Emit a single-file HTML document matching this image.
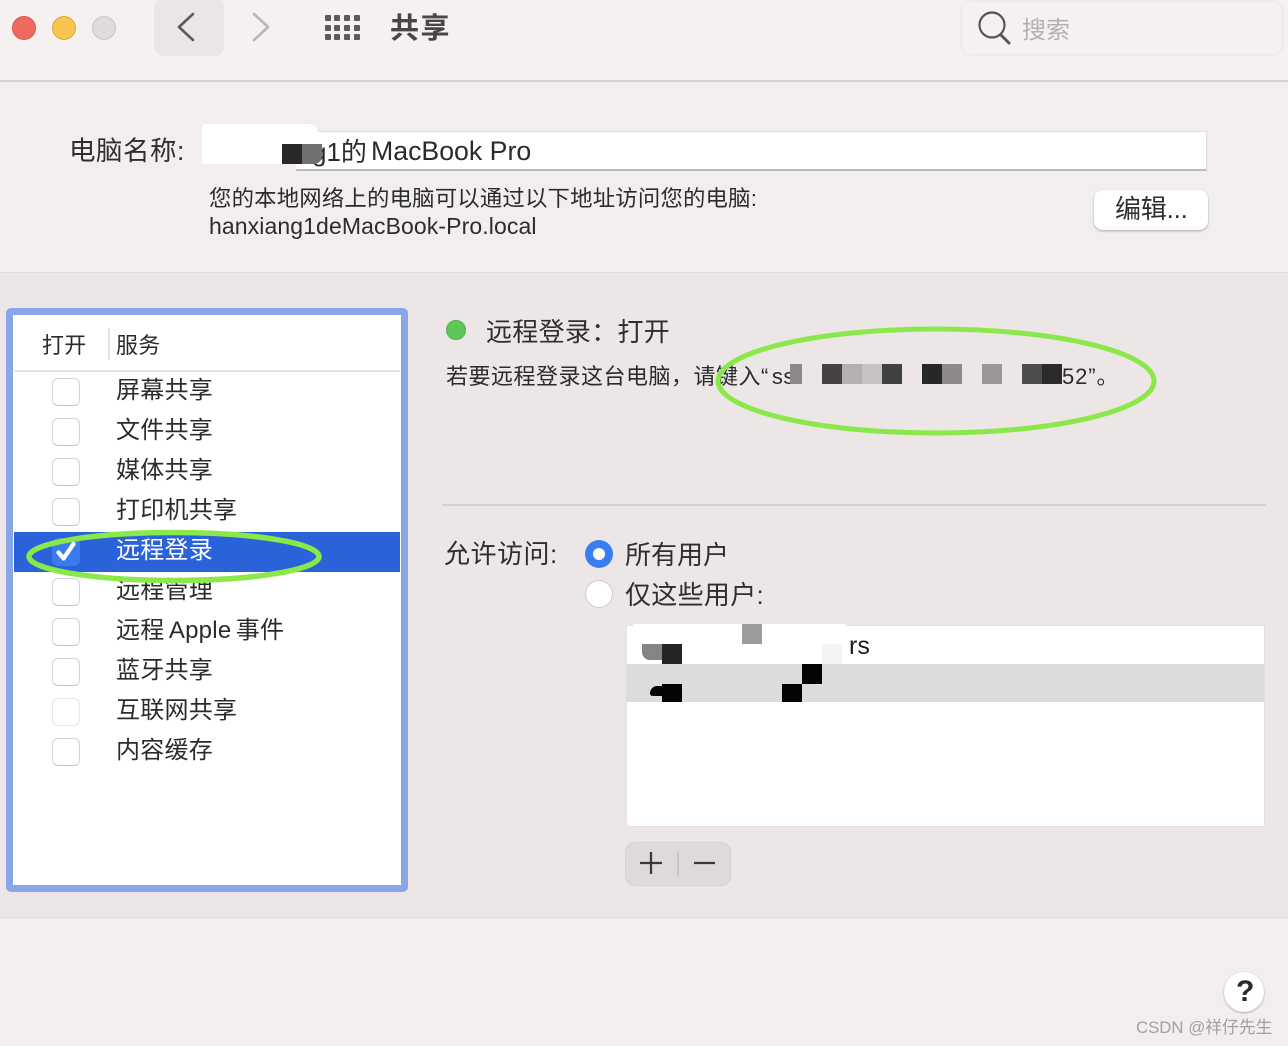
<!DOCTYPE html>
<html lang="zh"><head><meta charset="utf-8"><title>共享</title>
<style>
html,body{margin:0;padding:0}
body{width:1288px;height:1046px;position:relative;overflow:hidden;background:#f3eeee;font-family:"Liberation Sans","Noto Sans CJK SC",sans-serif;color:#2b2b2b}
.a{position:absolute}
.t{position:absolute;white-space:nowrap;line-height:1}
.cb{position:absolute;left:52px;width:28px;height:28px;box-sizing:border-box;background:#fff;border:1px solid #d2d0d0;border-bottom-color:#c4c2c2;border-radius:6px}
.li{left:116px;font-size:24px;letter-spacing:.25px;word-spacing:-2.6px}
.px{position:absolute}
</style></head><body>
<div class="a" style="left:0;top:0;width:1288px;height:80px;background:#f6f1f1"></div>
<div class="a" style="left:0;top:80px;width:1288px;height:2px;background:#d5d1d1"></div>
<div class="a" style="left:12px;top:16px;width:24px;height:24px;border-radius:50%;background:#ee6a5f;box-sizing:border-box;border:1px solid #d9584f"></div>
<div class="a" style="left:52px;top:16px;width:24px;height:24px;border-radius:50%;background:#f6c34f;box-sizing:border-box;border:1px solid #dfa93a"></div>
<div class="a" style="left:92px;top:16px;width:24px;height:24px;border-radius:50%;background:#e0dbdb;box-sizing:border-box;border:1px solid #c9c4c4"></div>
<div class="a" style="left:154px;top:-2px;width:70px;height:58px;border-radius:10px;background:#ebe6e6"></div>
<svg class="a" style="left:0;top:0" width="400" height="60" fill="none">
<path d="M193 14 L179 27 L193 40" stroke="#5e5a5a" stroke-width="2.6" stroke-linecap="round" stroke-linejoin="round"/>
<path d="M254 14 L268 27 L254 40" stroke="#b9b5b5" stroke-width="2.6" stroke-linecap="round" stroke-linejoin="round"/>
<g fill="#5f5b5b">
<rect x="325" y="15" width="6" height="6" rx="1"/><rect x="334" y="15" width="6" height="6" rx="1"/><rect x="344" y="15" width="6" height="6" rx="1"/><rect x="354" y="15" width="6" height="6" rx="1"/>
<rect x="325" y="25" width="6" height="6" rx="1"/><rect x="334" y="25" width="6" height="6" rx="1"/><rect x="344" y="25" width="6" height="6" rx="1"/><rect x="354" y="25" width="6" height="6" rx="1"/>
<rect x="325" y="34" width="6" height="6" rx="1"/><rect x="334" y="34" width="6" height="6" rx="1"/><rect x="344" y="34" width="6" height="6" rx="1"/><rect x="354" y="34" width="6" height="6" rx="1"/>
</g></svg>
<div class="t" style="left:390px;top:15px;font-size:29px;font-weight:bold;color:#4a4646;letter-spacing:1.5px">共享</div>
<div class="a" style="left:960px;top:0;width:324px;height:56px;box-sizing:border-box;border:2px solid #efeaea;border-radius:12px"></div>
<svg class="a" style="left:975px;top:7px" width="40" height="38" fill="none"><circle cx="17" cy="18" r="12.5" stroke="#555" stroke-width="2.2"/><path d="M26 28 L34 36" stroke="#555" stroke-width="3" stroke-linecap="round"/></svg>
<div class="t" style="left:1022px;top:19px;font-size:24px;color:#b4b0b0">搜索</div>

<div class="t" style="left:69px;top:138px;font-size:26.5px;color:#2e2e2e;letter-spacing:.5px">电脑名称:</div>
<div class="a" style="left:296px;top:131px;width:911px;height:40px;box-sizing:border-box;background:#fff;border:1px solid #e0dcdc;border-bottom:2px solid #bdbaba;border-left:0"></div>
<div class="a" style="left:202px;top:124px;width:116px;height:40px;background:#fff;border-radius:3px 8px 0 0"></div>
<div class="t" style="left:312px;top:139px;font-size:26px;color:#2b2b2b">g1的</div>
<div class="t" style="left:371px;top:138px;font-size:26.7px;color:#2b2b2b">MacBook Pro</div>
<div class="px" style="left:282px;top:144px;width:20px;height:20px;background:#282828"></div>
<div class="px" style="left:302px;top:144px;width:20px;height:20px;background:#707070;border-radius:0 0 8px 0"></div>
<div class="t" style="left:209px;top:188px;font-size:22.4px;color:#2b2b2b;letter-spacing:.18px">您的本地网络上的电脑可以通过以下地址访问您的电脑:</div>
<div class="t" style="left:209px;top:215px;font-size:23px;color:#2b2b2b;letter-spacing:.1px">hanxiang1deMacBook-Pro.local</div>
<div class="a" style="left:1094px;top:190px;width:114px;height:40px;background:#fff;border-radius:9px;box-shadow:0 1px 2px rgba(0,0,0,.3)"></div>
<div class="t" style="left:1115px;top:196px;font-size:26px;color:#2e2e2e;letter-spacing:-.2px">编辑...</div>

<div class="a" style="left:0;top:272px;width:1288px;height:646px;box-sizing:border-box;background:#ece6e6;border-top:1px solid #e3dede;border-bottom:1px solid #e0dbdb"></div>

<div class="a" style="left:6px;top:308px;width:402px;height:584px;box-sizing:border-box;background:#fff;border:7px solid #8ba6e8;border-radius:5px"></div>
<div class="t" style="left:42px;top:335px;font-size:22px;letter-spacing:.3px">打开</div>
<div class="a" style="left:108px;top:328px;width:2px;height:32px;background:#e3e1e1"></div>
<div class="t" style="left:116px;top:335px;font-size:22px;letter-spacing:.3px">服务</div>
<div class="a" style="left:14px;top:370px;width:386px;height:2px;background:#e5e3e3"></div>
<div class="a" style="left:14px;top:532px;width:386px;height:40px;background:#2962d9"></div>

<div class="cb" style="top:378px"></div><div class="t li" style="top:379px">屏幕共享</div>
<div class="cb" style="top:418px"></div><div class="t li" style="top:419px">文件共享</div>
<div class="cb" style="top:458px"></div><div class="t li" style="top:459px">媒体共享</div>
<div class="cb" style="top:498px"></div><div class="t li" style="top:499px">打印机共享</div>
<div class="cb" style="top:538px;background:#3a7cf0;border:0"></div>
<svg class="a" style="left:52px;top:538px" width="28" height="28" fill="none"><path d="M6.5 14.5 L11.5 20.5 L21.5 6" stroke="#fff" stroke-width="4.2" stroke-linecap="round" stroke-linejoin="round"/></svg>
<div class="t li" style="top:539px;color:#fff">远程登录</div>
<div class="cb" style="top:578px"></div><div class="t li" style="top:579px">远程管理</div>
<div class="cb" style="top:618px"></div><div class="t li" style="top:619px">远程 Apple 事件</div>
<div class="cb" style="top:658px"></div><div class="t li" style="top:659px">蓝牙共享</div>
<div class="cb" style="top:698px;border-color:#e8e6e6"></div><div class="t li" style="top:699px">互联网共享</div>
<div class="cb" style="top:738px"></div><div class="t li" style="top:739px">内容缓存</div>

<div class="a" style="left:446px;top:320px;width:20px;height:20px;border-radius:50%;background:#5fc658;box-sizing:border-box;border:1px solid #52b04c"></div>
<div class="t" style="left:486px;top:319px;font-size:26px;color:#2e2e2e;letter-spacing:.3px">远程登录&#xFF1A;打开</div>
<div class="t" style="left:446px;top:366px;font-size:22px;color:#2b2b2b;letter-spacing:.5px">若要远程登录这台电脑&#xFF0C;请键入“<span style="margin-left:3px">ss</span></div>
<div class="a" style="left:795px;top:345px;width:267px;height:60px;background:#ece6e6"></div>
<div class="t" style="left:1062px;top:366px;font-size:22px;color:#2b2b2b;letter-spacing:.9px">52”。</div>
<div class="px" style="left:790px;top:364px;width:12px;height:20px;background:#8c8888"></div>
<div class="px" style="left:822px;top:364px;width:20px;height:20px;background:#454244"></div>
<div class="px" style="left:842px;top:364px;width:20px;height:20px;background:#b5b0b0"></div>
<div class="px" style="left:862px;top:364px;width:20px;height:20px;background:#c8c3c3"></div>
<div class="px" style="left:882px;top:364px;width:20px;height:20px;background:#414141"></div>
<div class="px" style="left:922px;top:364px;width:20px;height:20px;background:#272727"></div>
<div class="px" style="left:942px;top:364px;width:20px;height:20px;background:#8d8989"></div>
<div class="px" style="left:982px;top:364px;width:20px;height:20px;background:#9b9797"></div>
<div class="px" style="left:1022px;top:364px;width:20px;height:20px;background:#4f4c4e"></div>
<div class="px" style="left:1042px;top:364px;width:20px;height:20px;background:#2a2a2a"></div>

<div class="a" style="left:442px;top:504px;width:824px;height:2px;background:#d3cfcf"></div>
<div class="t" style="left:444px;top:541px;font-size:26px;color:#2e2e2e;letter-spacing:.5px">允许访问:</div>
<div class="a" style="left:585px;top:540px;width:28px;height:28px;border-radius:50%;background:#3a7df2"></div>
<div class="a" style="left:593px;top:548px;width:12px;height:12px;border-radius:50%;background:#fff"></div>
<div class="t" style="left:625px;top:542px;font-size:26px;color:#2e2e2e">所有用户</div>
<div class="a" style="left:585px;top:580px;width:28px;height:28px;box-sizing:border-box;border-radius:50%;background:#fff;border:1px solid #cfcbcb"></div>
<div class="t" style="left:625px;top:582px;font-size:26px;color:#2e2e2e;letter-spacing:.3px">仅这些用户:</div>

<div class="a" style="left:627px;top:626px;width:637px;height:200px;background:#fff;box-shadow:0 0 0 1px #e4dfdf"></div>
<div class="a" style="left:633px;top:624px;width:213px;height:4px;background:#fff"></div>
<div class="a" style="left:627px;top:664px;width:637px;height:38px;background:#dcdcdc"></div>
<div class="t" style="left:849px;top:634px;font-size:25px;color:#1c1c1c">rs</div>
<div class="px" style="left:742px;top:624px;width:20px;height:20px;background:#9c9c9c"></div>
<div class="px" style="left:642px;top:644px;width:20px;height:16px;background:#858585;border-radius:0 0 0 8px"></div>
<div class="px" style="left:662px;top:644px;width:20px;height:20px;background:#252525"></div>
<div class="px" style="left:822px;top:644px;width:20px;height:20px;background:#f4f4f4"></div>
<div class="px" style="left:802px;top:664px;width:20px;height:20px;background:#050505"></div>
<div class="px" style="left:782px;top:684px;width:20px;height:18px;background:#050505"></div>
<div class="px" style="left:662px;top:684px;width:20px;height:18px;background:#050505"></div>
<div class="px" style="left:650px;top:686px;width:14px;height:10px;background:#050505;border-radius:8px 0 0 3px"></div>

<div class="a" style="left:625px;top:842px;width:106px;height:44px;box-sizing:border-box;background:#dfd9d9;border:1px solid #d6d1d1;border-radius:10px"></div>
<div class="a" style="left:677px;top:852px;width:2px;height:24px;background:#cbc6c6"></div>
<svg class="a" style="left:636px;top:850px" width="90" height="26" fill="none" stroke="#383838" stroke-width="2.2"><path d="M15 2 V24 M4 13 H26"/><path d="M58 13 H79"/></svg>

<div class="a" style="left:1224px;top:972px;width:40px;height:40px;border-radius:50%;background:#fff;box-shadow:0 1px 2px rgba(0,0,0,.3)"></div>
<div class="t" style="left:1236px;top:977px;font-size:30px;font-weight:bold;color:#2a2a2a">?</div>
<div class="t" style="left:1136px;top:1020px;font-size:16.8px;color:#a3a0a0;letter-spacing:0">CSDN @祥仔先生</div>

<svg class="a" style="left:0;top:0;pointer-events:none" width="1288" height="1046" fill="none" stroke="#8be84a">
<ellipse cx="936" cy="381" rx="218" ry="52" stroke-width="5"/>
<ellipse cx="174" cy="556.5" rx="145" ry="24" stroke-width="5.5"/>
</svg>
</body></html>
